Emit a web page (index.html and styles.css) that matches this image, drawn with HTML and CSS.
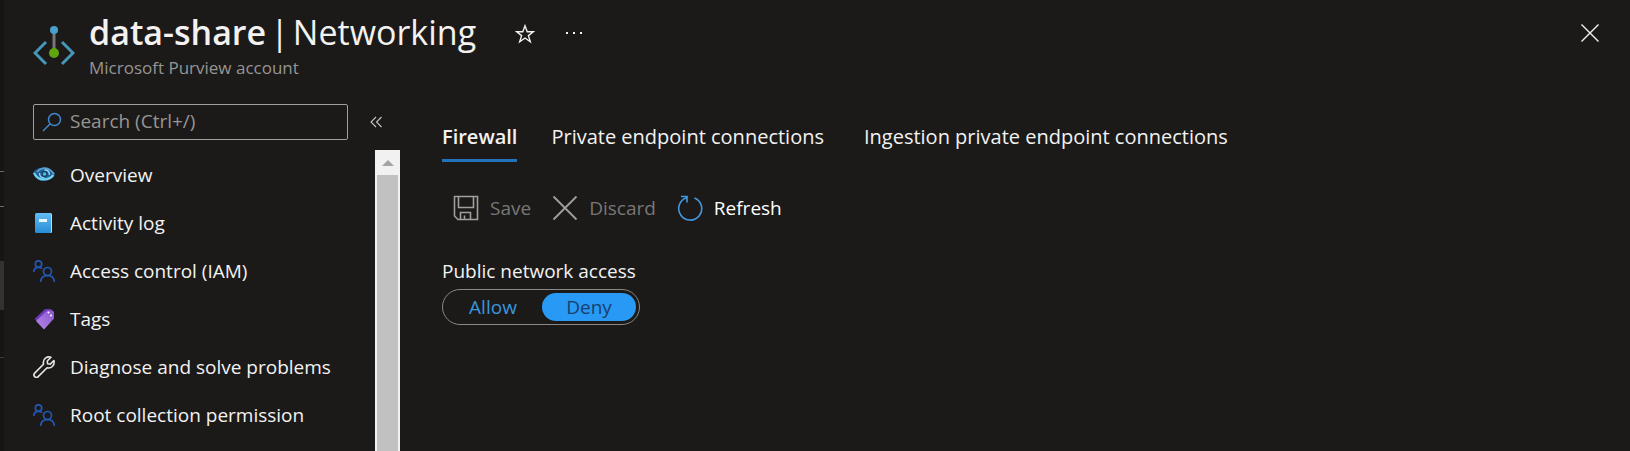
FILE: index.html
```
<!DOCTYPE html>
<html lang="en">
  <head>
    <meta charset="UTF-8" />
    <meta name="viewport" content="width=device-width, initial-scale=1.0" />
    <title>data-share | Networking</title>
    <link rel="stylesheet" href="styles.css">
  </head>
  <body>
    <div class="page-edge">
      <span class="edge-line edge-line-first"></span>
      <span class="edge-line"></span>
      <span class="edge-block"></span>
      <span class="edge-line edge-line-dim"></span>
    </div>

    <div class="blade">
      <header>
        <svg class="resource-icon" viewBox="0 0 42 42" fill="none">
          <path d="M13 18 2 29l11 11M29 18l11 11-11 11" stroke="#4596b9" stroke-width="3" />
          <path d="M21 6v22" stroke="#777" stroke-width="3" />
          <circle cx="21" cy="6" r="4" fill="#4a9fcb" />
          <circle cx="21" cy="29" r="5" fill="#5fa510" />
        </svg>
        <div class="title-block">
          <div class="title-row">
            <h1><strong>data-share</strong> <span>|</span> <span>Networking</span></h1>
            <button type="button" class="icon-button star-button" aria-label="Add to favorites">
              <svg width="20" height="20" viewBox="0 0 20 20" fill="none" stroke="#f3f2f1" stroke-width="1.4">
                <path d="M10 1.800l2.200 5.900h6.200l-5 3.900 1.900 6.200-5.300-3.800-5.300 3.800 1.900-6.200-5-3.900h6.200z" />
              </svg>
            </button>
            <button type="button" class="icon-button" aria-label="More">
              <svg width="18" height="20" viewBox="0 0 18 20" fill="#f3f2f1">
                <path d="M1 8h2v2H1zM8 8h2v2H8zM15 8h2v2h-2z" />
              </svg>
            </button>
          </div>
          <p class="subtitle">Microsoft Purview account</p>
        </div>
        <button type="button" class="icon-button close-button" aria-label="Close">
          <svg width="20" height="20" viewBox="0 0 20 20" fill="none" stroke="#f3f2f1" stroke-width="1.4">
            <path d="M1.5 1.5l17 17M18.5 1.5l-17 17" />
          </svg>
        </button>
      </header>

      <div class="blade-body">
        <aside class="sidebar">
          <div class="search-row">
            <div class="search-box">
              <svg width="20" height="20" viewBox="0 0 20 20" fill="none" stroke="#3f87cf" stroke-width="1.5">
                <circle cx="12.5" cy="7.5" r="6" />
                <path d="M8.2 11.8 1 19" />
              </svg>
              <input type="text" aria-label="Search" placeholder="Search (Ctrl+/)" />
            </div>
            <button type="button" class="icon-button" aria-label="Collapse menu">
              <svg width="12" height="12" viewBox="0 0 12 12" fill="none" stroke="#c8c6c4" stroke-width="1.1">
                <path d="M6 1 1 6l5 5M11.5 1l-5 5 5 5" />
              </svg>
            </button>
          </div>

          <div class="menu-area">
            <nav class="menu">
              <a href="#" class="menu-item">
                <svg width="22" height="22" viewBox="0 0 22 22" fill="none">
                  <path d="M0 8.500C4 3 12 2 18 5.500L22 10c-2 4-6 7-11 7C6 17 2 14 0 8.500z" fill="#1f5f94" />
                  <path d="M1 9c2 4 5 6.500 9.500 6.500 4 0 8-2 10-4.500" stroke="#6fd3f0" stroke-width="2.2" />
                  <path d="M4 8c3-4 9-5 13-2 1.500 1 2.500 2.500 4 4" stroke="#5b9fd0" stroke-width="1.8" />
                  <path d="M6.500 9c0 3 2 5 5 5M16.500 11c0-3-2-5-5-5" stroke="#8fd6f0" stroke-width="1.4" />
                  <circle cx="11.5" cy="10" r="3" fill="#123f66" />
                  <circle cx="11.5" cy="10" r="1.8" fill="#55b9dd" />
                </svg>
                Overview
              </a>
              <a href="#" class="menu-item">
                <svg width="22" height="22" viewBox="0 0 22 22">
                  <defs>
                    <linearGradient id="log-fill" x1="0" y1="0" x2="0" y2="1">
                      <stop offset="0" stop-color="#63bdf2" />
                      <stop offset="1" stop-color="#268bd8" />
                    </linearGradient>
                  </defs>
                  <rect x="4" y="1" width="15" height="20" rx="1.5" fill="#b8e2f8" />
                  <rect x="2" y="1" width="16" height="20" rx="1.5" fill="url(#log-fill)" />
                  <rect x="6" y="7" width="8" height="3" fill="#e8f7ff" />
                </svg>
                Activity log
              </a>
              <a href="#" class="menu-item">
                <svg width="22" height="22" viewBox="0 0 22 22" fill="none" stroke="#2258b0" stroke-width="1.7">
                  <circle cx="5.5" cy="4" r="3.2" />
                  <path d="M.8 12c0-3 2-4.700 4.700-4.700 1.600 0 2.800.5 3.600 1.500" />
                  <circle cx="14.5" cy="11.5" r="4" />
                  <path d="M7.600 22c.3-4 3-6.300 6.900-6.300s6.600 2.300 6.900 6.300" />
                </svg>
                Access control (IAM)
              </a>
              <a href="#" class="menu-item">
                <svg width="22" height="22" viewBox="0 0 22 22">
                  <defs>
                    <linearGradient id="tag-fill" x1="1" y1="0" x2="0" y2="1">
                      <stop offset="0" stop-color="#8a55d0" />
                      <stop offset="1" stop-color="#b58ae6" />
                    </linearGradient>
                  </defs>
                  <path d="M12 1h6l2 3L6 15l-4.500-4z" fill="#6b38b5" />
                  <path d="M14 2.500h5.500L21 4v6.500L11 21.500l-8-8.500z" fill="url(#tag-fill)" />
                  <circle cx="15.5" cy="4.500" r="1" fill="#fff" />
                  <circle cx="18" cy="7.500" r="1" fill="#fff" />
                </svg>
                Tags
              </a>
              <a href="#" class="menu-item">
                <svg width="22" height="22" viewBox="0 0 22 22" fill="none" stroke="#e8e6e4" stroke-width="1.6" stroke-linejoin="round">
                  <path d="M18 1.300c-3.500-1.300-8 1-7.700 5.700l.2 1.200-8.800 8.900c-2.300 2.500 1.200 5.800 3.500 3.500l8.900-8.800c4.300 1 8-2.900 6.800-7.300l-3.600 3.600-2.700-.3-.3-2.800z" />
                </svg>
                Diagnose and solve problems
              </a>
              <a href="#" class="menu-item">
                <svg width="22" height="22" viewBox="0 0 22 22" fill="none" stroke="#2258b0" stroke-width="1.7">
                  <circle cx="5.5" cy="4" r="3.2" />
                  <path d="M.8 12c0-3 2-4.700 4.700-4.700 1.600 0 2.800.5 3.600 1.500" />
                  <circle cx="14.5" cy="11.5" r="4" />
                  <path d="M7.600 22c.3-4 3-6.300 6.900-6.300s6.600 2.300 6.900 6.300" />
                </svg>
                Root collection permission
              </a>
            </nav>
            <div class="scroll-track">
              <div class="scroll-up"></div>
              <div class="scroll-thumb"></div>
            </div>
          </div>
        </aside>

        <main>
          <div class="tabs" role="tablist">
            <button type="button" role="tab" aria-selected="true" class="tab active">Firewall</button>
            <button type="button" role="tab" aria-selected="false" class="tab">Private endpoint connections</button>
            <button type="button" role="tab" aria-selected="false" class="tab">Ingestion private endpoint connections</button>
          </div>

          <div class="toolbar">
            <button type="button" class="command" disabled>
              <svg width="26" height="26" viewBox="0 0 26 26" fill="none" stroke="#a19f9d" stroke-width="1.6">
                <path d="M1.500 1.500h23v23H5l-3.500-3.500zM5.500 1.500v11h15v-11M7.500 24.500v-7h10v7M11.500 24.500v-4" />
              </svg>
              Save
            </button>
            <button type="button" class="command" disabled>
              <svg width="26" height="26" viewBox="0 0 26 26" fill="none" stroke="#a19f9d" stroke-width="1.8">
                <path d="M1.500 1.500l23 23M24.500 1.500l-23 23" />
              </svg>
              Discard
            </button>
            <button type="button" class="command">
              <svg width="26" height="26" viewBox="0 0 26 26" fill="none" stroke="#4398e0" stroke-width="1.6">
                <path d="M9.500 2.700a11.500 11.500 0 1 0 8 .2M4 1.500h6v6" />
              </svg>
              Refresh
            </button>
          </div>

          <fieldset class="access">
            <legend>Public network access</legend>
            <div class="toggle">
              <label><input type="radio" name="access" value="allow" /><span>Allow</span></label>
              <label><input type="radio" name="access" value="deny" checked /><span>Deny</span></label>
            </div>
          </fieldset>
        </main>
      </div>
    </div>
  </body>
</html>
```
FILE: styles.css
```
* {
  box-sizing: border-box;
  margin: 0;
  padding: 0;
}

html,
body {
  height: 100%;
  overflow: hidden;
}

body {
  font-family: "Segoe UI", "Open Sans", "Noto Sans", sans-serif;
  font-size: 19px;
  line-height: 24px;
  background-color: #1b1a19;
  color: #f3f2f1;
  display: flex;
}

button,
input {
  font: inherit;
  color: inherit;
}

button {
  background: none;
  border: none;
  cursor: pointer;
}

svg {
  display: block;
  flex-shrink: 0;
}

/* Sliver of the page behind the blade */
.page-edge {
  width: 4px;
  flex-shrink: 0;
  background-color: #161514;
}
.edge-line {
  display: block;
  height: 1px;
  margin-bottom: 34px;
  background-color: #6b6a69;
}
.edge-line-first {
  margin-top: 171px;
}
.edge-block {
  display: block;
  height: 49px;
  margin: 54px 0 47px;
  background-color: #333231;
}
.edge-line-dim {
  background-color: #3b3a39;
}

.blade {
  flex-grow: 1;
  min-width: 0;
  display: flex;
  flex-direction: column;
}

header {
  display: flex;
  align-items: flex-start;
  padding: 8px 30px 0 29px;
  flex-shrink: 0;
}
.resource-icon {
  width: 42px;
  height: 42px;
  margin: 16px 14px 0 0;
}
.title-block {
  flex-grow: 1;
}
.title-row {
  display: flex;
  align-items: center;
}
h1 {
  display: flex;
  gap: 4px;
  font-size: 34px;
  line-height: 48px;
  font-weight: 400;
}
h1 strong {
  font-weight: 600;
}
.subtitle {
  font-size: 17px;
  color: #979593;
}
.icon-button {
  display: flex;
  align-items: center;
}
.title-row .icon-button {
  padding-top: 4px;
}
.star-button {
  margin: 0 30px 0 39px;
}
.close-button {
  margin-top: 15px;
}

.blade-body {
  display: flex;
  flex-grow: 1;
  min-height: 0;
}

.sidebar {
  width: 396px;
  flex-shrink: 0;
  display: flex;
  flex-direction: column;
  padding: 24px 0 0 29px;
}
.search-row {
  display: flex;
  align-items: center;
  gap: 22px;
  margin-bottom: 10px;
}
.search-box {
  display: flex;
  align-items: center;
  gap: 8px;
  width: 315px;
  height: 36px;
  padding: 0 8px;
  border: 1px solid #a19f9d;
  border-radius: 2px;
}
.search-box input {
  flex-grow: 1;
  min-width: 0;
  padding-bottom: 2px;
  background: none;
  border: none;
  outline: none;
}
.search-box input::placeholder {
  color: #979593;
  opacity: 1;
}

.menu-area {
  display: flex;
  flex-grow: 1;
  min-height: 0;
}
.menu {
  flex-grow: 1;
  padding-top: 1px;
}
.menu-item {
  display: flex;
  align-items: center;
  gap: 15px;
  height: 48px;
  color: #f3f2f1;
  text-decoration: none;
  white-space: nowrap;
}
.scroll-track {
  width: 25px;
  display: flex;
  flex-direction: column;
  align-items: center;
  background-color: #f1f1f1;
}
.scroll-up {
  margin: 10px 0 9px;
  border: 6px solid transparent;
  border-top: none;
  border-bottom-color: #a3a3a3;
}
.scroll-thumb {
  width: 21px;
  flex-grow: 1;
  background-color: #c1c1c1;
}

main {
  flex-grow: 1;
  padding: 45px 30px 0 42px;
}
.tabs {
  display: flex;
  gap: 28px;
}
.tab {
  padding: 0 6px 10px;
  border-bottom: 3px solid transparent;
  font-size: 20px;
  white-space: nowrap;
}
.tab.active {
  padding: 0 0 10px;
  font-weight: 600;
  border-bottom-color: #2373b8;
}

.toolbar {
  display: flex;
  gap: 21px;
  padding: 33px 0 0 11px;
}
.command {
  display: flex;
  align-items: center;
  gap: 11px;
  color: #fff;
}
.command:disabled {
  color: #797775;
  cursor: default;
}

.access {
  border: none;
  margin-top: 38px;
}
.access legend {
  margin-bottom: 6px;
}
.toggle {
  display: inline-flex;
  gap: 2px;
  height: 36px;
  padding: 3px;
  border: 1px solid #8a8886;
  border-radius: 18px;
}
.toggle label {
  position: relative;
  display: flex;
}
.toggle input {
  position: absolute;
  opacity: 0;
}
.toggle span {
  width: 94px;
  line-height: 28px;
  border-radius: 14px;
  text-align: center;
  color: #3a96dd;
  cursor: pointer;
}
.toggle input:checked + span {
  background-color: #2899f5;
  color: #17406b;
}
.toggle input:focus-visible + span {
  outline: 1px solid #fff;
}
```
